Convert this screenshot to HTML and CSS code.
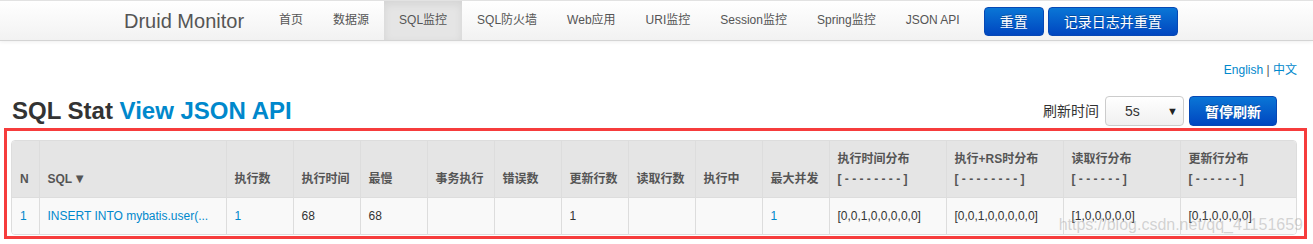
FILE: index.html
```html
<!DOCTYPE html>
<html lang="zh-CN">
<head>
  <meta charset="UTF-8">
  <meta name="viewport" content="width=device-width, initial-scale=1.0">
  <title>Druid Stat Index</title>
  <link rel="stylesheet" href="styles.css">
</head>
<body>

  <div class="navbar">
    <div class="navbar-inner">
      <a class="brand" href="#">Druid Monitor</a>
      <ul class="nav">
        <li><a href="#">首页</a></li>
        <li><a href="#">数据源</a></li>
        <li class="active"><a href="#">SQL监控</a></li>
        <li><a href="#">SQL防火墙</a></li>
        <li><a href="#">Web应用</a></li>
        <li><a href="#">URI监控</a></li>
        <li><a href="#">Session监控</a></li>
        <li><a href="#">Spring监控</a></li>
        <li><a href="#">JSON API</a></li>
      </ul>
      <button class="btn btn-primary">重置</button>
      <button class="btn btn-primary">记录日志并重置</button>
    </div>
  </div>

  <div class="container">
    <div class="lang">
      <a href="#">English</a> <span class="sep">|</span> <a href="#">中文</a>
    </div>

    <div class="title-row">
      <h2>SQL Stat <a href="#">View JSON API</a></h2>
      <div class="refresh">
        <span class="refresh-label">刷新时间</span>
        <div class="select">
          <span>5s</span>
          <span class="caret">&#9660;</span>
        </div>
        <button class="btn btn-primary btn-bold">暂停刷新</button>
      </div>
    </div>

    <div class="mark">
      <div class="grid-box">
        <table class="grid">
          <thead>
            <tr>
              <th class="w-n">N</th>
              <th class="w-sql">SQL<span class="sort">&#9660;</span></th>
              <th class="w-num">执行数</th>
              <th class="w-num">执行时间</th>
              <th class="w-num">最慢</th>
              <th class="w-num">事务执行</th>
              <th class="w-num">错误数</th>
              <th class="w-num">更新行数</th>
              <th class="w-num">读取行数</th>
              <th class="w-num">执行中</th>
              <th class="w-num">最大并发</th>
              <th class="w-hist">执行时间分布<br>[ - - - - - - - - ]</th>
              <th class="w-hist">执行+RS时分布<br>[ - - - - - - - - ]</th>
              <th class="w-hist">读取行分布<br>[ - - - - - - ]</th>
              <th class="w-hist">更新行分布<br>[ - - - - - - ]</th>
            </tr>
          </thead>
          <tbody>
            <tr>
              <td><a href="#">1</a></td>
              <td><a href="#">INSERT INTO mybatis.user(...</a></td>
              <td><a href="#">1</a></td>
              <td>68</td>
              <td>68</td>
              <td></td>
              <td></td>
              <td>1</td>
              <td></td>
              <td></td>
              <td><a href="#">1</a></td>
              <td>[0,0,1,0,0,0,0,0]</td>
              <td>[0,0,1,0,0,0,0,0]</td>
              <td>[1,0,0,0,0,0]</td>
              <td>[0,1,0,0,0,0]</td>
            </tr>
          </tbody>
        </table>
      </div>
      <div class="watermark">https://blog.csdn.net/qq_41151659</div>
    </div>
  </div>

</body>
</html>
```

FILE: styles.css
```css
* {
  margin: 0;
  padding: 0;
  box-sizing: border-box;
}

body {
  font-family: 'Liberation Sans', 'Noto Sans CJK SC', sans-serif;
  font-size: 12px;
  line-height: 20px;
  color: #333;
  background: #fff;
}

a {
  color: #0088cc;
  text-decoration: none;
}

/* top navigation */
.navbar {
  border-top: 1px solid #e2e2e2;
  border-bottom: 1px solid #d4d4d4;
  background: linear-gradient(to bottom, #ffffff, #f2f2f2);
  box-shadow: 0 1px 4px rgba(0, 0, 0, 0.065);
}

.navbar-inner {
  display: flex;
  align-items: center;
  height: 39px;
  padding-left: 104px;
}

.brand {
  padding: 0 20px;
  font-size: 20px;
  color: #555;
}

.nav {
  display: flex;
  list-style: none;
  height: 39px;
  margin-right: 9px;
}

.nav li a {
  display: block;
  padding: 0 15px;
  line-height: 39px;
  font-size: 12px;
  color: #555;
}

.nav li.active a {
  background: #e5e5e5;
  box-shadow: inset 0 3px 8px rgba(0, 0, 0, 0.08);
}

.btn {
  height: 29px;
  padding: 0 15px;
  font-family: inherit;
  font-size: 14px;
  border-radius: 4px;
  cursor: pointer;
}

.btn-primary {
  color: #fff;
  background: linear-gradient(to bottom, #0a76d6, #0046c0);
  border: 1px solid #0748b4;
  text-shadow: 0 -1px 0 rgba(0, 0, 0, 0.25);
}

.navbar .btn {
  margin-top: 1px;
  margin-right: 4px;
}

.btn-bold {
  font-weight: bold;
  height: 30px;
}

/* page body */
.container {
  padding: 0 0 0 4px;
}

.lang {
  text-align: right;
  padding: 20px 16px 0 0;
  line-height: 18px;
}

.lang .sep {
  color: #555;
}

.title-row {
  display: flex;
  justify-content: space-between;
  align-items: center;
  margin-top: 17px;
  height: 30px;
  padding-left: 8px;
}

.title-row h2 {
  font-size: 24px;
  line-height: 30px;
  font-weight: bold;
  color: #333;
}

.refresh {
  display: flex;
  align-items: center;
  margin-right: 36px;
}

.refresh-label {
  font-size: 14px;
  margin-right: 6px;
}

.select {
  display: flex;
  justify-content: space-between;
  align-items: center;
  width: 79px;
  height: 30px;
  padding: 0 5px 0 19px;
  margin-right: 5px;
  font-size: 14px;
  border: 1px solid #ccc;
  border-radius: 4px;
  background: linear-gradient(to bottom, #ffffff, #f0f0f0);
}

.select .caret {
  font-size: 11px;
  color: #222;
}

/* red annotation frame round the table */
.mark {
  position: relative;
  width: 1303px;
  margin-top: 2px;
  padding: 9px 7px 1px 4px;
  border: 3px solid #f63c3c;
}

.grid-box {
  border: 1px solid #ddd;
  border-radius: 4px;
  overflow: hidden;
}

.grid {
  width: 100%;
  border-collapse: collapse;
  table-layout: fixed;
}

.grid th,
.grid td {
  padding: 8px;
  text-align: left;
  border-left: 1px solid #ddd;
  white-space: nowrap;
  overflow: hidden;
}

.grid th:first-child,
.grid td:first-child {
  border-left: none;
}

.grid th {
  vertical-align: bottom;
  background: #e5e5e5;
  color: #555;
  font-weight: bold;
}

.grid th .sort {
  font-size: 13px;
  margin-left: 1px;
}

.grid td {
  background: #f9f9f9;
  border-top: 1px solid #ddd;
  color: #333;
}

.w-n { width: 27px; }
.w-sql { width: 187px; }
.w-num { width: 67px; }
.w-hist { width: 117px; }

.watermark {
  position: absolute;
  right: 1px;
  bottom: 2px;
  font-size: 16px;
  line-height: 18px;
  color: rgba(150, 150, 150, 0.4);
  pointer-events: none;
}
```
